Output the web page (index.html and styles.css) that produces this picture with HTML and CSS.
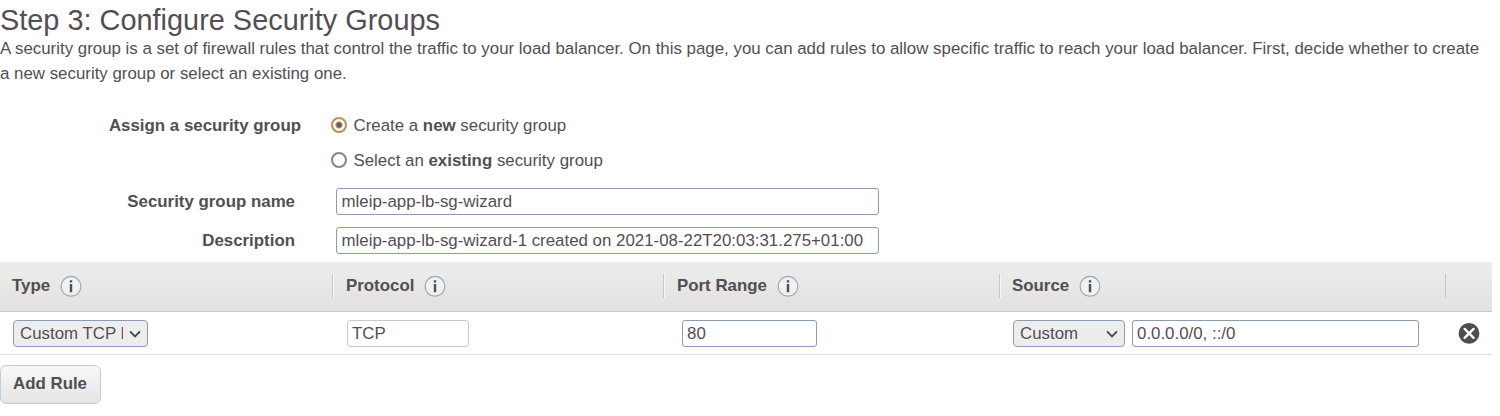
FILE: index.html
```html
<!DOCTYPE html>
<html lang="en">
<head>
<meta charset="utf-8">
<title>Configure Security Groups</title>
<link rel="stylesheet" href="styles.css">
</head>
<body>
<svg class="defs" width="0" height="0" aria-hidden="true">
  <symbol id="info" viewBox="0 0 22 22">
    <circle cx="11" cy="11.300" r="9.900" fill="#eff2f2" stroke="#98a5b8" stroke-width="1.200"/>
    <path d="M9.800 5.300h2.400v2.300H9.800zM9.800 9h2.400v8.300H9.800z" fill="#544d55"/>
  </symbol>
  <symbol id="chevron" viewBox="0 0 12 8">
    <path d="M1 1.300 6 6.300l5-5" fill="none" stroke="#4a444c" stroke-width="1.900"/>
  </symbol>
</svg>
<main class="page">
  <h1 class="title">Step 3: Configure Security Groups</h1>
  <p class="intro">A security group is a set of firewall rules that control the traffic to your load balancer. On this page, you can add rules to allow specific traffic to reach your load balancer. First, decide whether to create<br>a new security group or select an existing one.</p>

  <form class="form">
    <div class="row choice-row">
      <span class="label">Assign a security group</span>
      <label class="choice"><span class="radio selected"></span><span>Create a <b>new</b> security group</span></label>
    </div>
    <div class="row choice-row">
      <span class="label"></span>
      <label class="choice"><span class="radio"></span><span>Select an <b>existing</b> security group</span></label>
    </div>
    <div class="row name-row">
      <span class="label">Security group name</span>
      <input class="field wide" value="mleip-app-lb-sg-wizard">
    </div>
    <div class="row desc-row">
      <span class="label">Description</span>
      <input class="field wide" value="mleip-app-lb-sg-wizard-1 created on 2021-08-22T20:03:31.275+01:00">
    </div>
  </form>

  <section class="rules">
    <div class="columns head">
      <div class="th first">Type<svg class="info"><use href="#info"/></svg></div>
      <div class="th">Protocol<svg class="info"><use href="#info"/></svg></div>
      <div class="th">Port Range<svg class="info"><use href="#info"/></svg></div>
      <div class="th source">Source<svg class="info"><use href="#info"/></svg></div>
      <div class="th last"></div>
    </div>
    <div class="columns body">
      <div class="td type-cell"><div class="select type"><span class="value">Custom TCP Rule</span><svg class="chevron"><use href="#chevron"/></svg></div></div>
      <div class="td protocol-cell"><input class="field protocol" value="TCP"></div>
      <div class="td port-cell"><input class="field port" value="80"></div>
      <div class="td source-cell"><div class="select custom"><span class="value">Custom</span><svg class="chevron"><use href="#chevron"/></svg></div><input class="field address" value="0.0.0.0/0, ::/0"></div>
      <div class="td remove-cell"><svg class="remove" viewBox="0 0 22 22"><circle cx="11" cy="11.400" r="10.400" fill="#514b53"/><path d="m6.600 6.900 9 9m0-9-9 9" stroke="#fff" stroke-width="2.300" stroke-linecap="round"/></svg></div>
    </div>
  </section>
  <button class="add" type="button">Add Rule</button>
</main>
</body>
</html>
```
FILE: styles.css
```css
* { box-sizing: border-box; }

body {
  margin: 0;
  background: #fff;
  color: #544d55;
  font: 16.87px/26px "Liberation Sans", Arial, sans-serif;
  overflow: hidden;
}

.defs { display: block; height: 0; }
.page { width: 1492px; }

.title {
  margin: 0;
  padding-top: 4px;
  font-size: 28.9px;
  font-weight: 400;
  line-height: 32px;
}

.intro {
  margin: 0;
  line-height: 25px;
  white-space: nowrap;
}

.form { padding-top: 22px; }
.row { display: flex; align-items: center; }
.choice-row { height: 35px; }
.name-row { height: 39px; margin-top: 4px; }
.desc-row { height: 39px; margin-bottom: 2px; }

.label {
  width: 295px;
  margin-right: 41px;
  text-align: right;
  font-weight: 700;
  white-space: nowrap;
}
.choice-row .label { width: 301px; margin-right: 30px; }

.choice { display: flex; align-items: center; gap: 6.5px; white-space: nowrap; }
.radio {
  width: 16px;
  height: 16px;
  margin-top: -1px;
  border: 2px solid #7d8799;
  border-radius: 50%;
  background: #fff;
}
.radio.selected {
  border-color: #bd8c58;
  background: radial-gradient(circle, #655b61 0 2px, #a98b70 2.8px 3.2px, #fff 4px);
}

.field {
  height: 27px;
  padding: 0 4px;
  border: 1px solid #8e9ab0;
  border-radius: 3px;
  background: #fff;
  color: inherit;
  font: inherit;
  outline: 0;
}
.wide { width: 543px; padding-left: 4.5px; }

.columns { display: grid; grid-template-columns: 332px 331px 336px 446px 47px; }
.head {
  height: 50px;
  padding-top: 12px;
  background: linear-gradient(#eceeed, #e5e4e3 70%, #e2e2e3);
  border-bottom: 1px solid #bdc7d7;
}
.th {
  display: flex;
  align-items: center;
  height: 24px;
  padding-left: 13px;
  border-left: 1px solid #c1c9d5;
  box-shadow: inset 1px 0 #f7f7f7;
  font-weight: 700;
}
.th.first { padding-left: 12px; border: 0; box-shadow: none; }
.th.source { padding-left: 12px; }
.th.last { box-shadow: none; }
.info { width: 22px; height: 22px; margin-left: 10px; }

.body { height: 43px; align-items: center; border-bottom: 1px solid #dedede; }
.td { display: flex; align-items: center; }
.type-cell { padding-left: 13px; }
.protocol-cell { padding-left: 15px; }
.port-cell { padding-left: 19px; }
.source-cell { padding-left: 14px; gap: 7px; }
.remove-cell { padding-left: 13px; }

.body .field { padding: 1px 4px 0; }
.select {
  display: flex;
  align-items: center;
  justify-content: space-between;
  height: 27px;
  padding: 1px 6px 0;
  border: 1px solid #8e9ab0;
  border-radius: 4px;
  background: #eceeed;
}
.value { overflow: hidden; white-space: nowrap; }
.type { width: 135px; }
.type .value { width: 103px; }
.custom { width: 112px; }
.chevron { flex: none; width: 12px; height: 8px; }
.protocol { width: 122px; border-color: #c3cad6; }
.port { width: 135px; }
.address { width: 287px; }
.remove { width: 22px; height: 22px; }

.add {
  display: block;
  width: 101px;
  height: 39px;
  margin-top: 10px;
  padding: 0 1px 2px 0;
  border: 1px solid #c5cbd4;
  border-radius: 6px;
  background: linear-gradient(#f8f8f8, #e5e5e5);
  color: inherit;
  font: inherit;
  font-weight: 700;
}
```
